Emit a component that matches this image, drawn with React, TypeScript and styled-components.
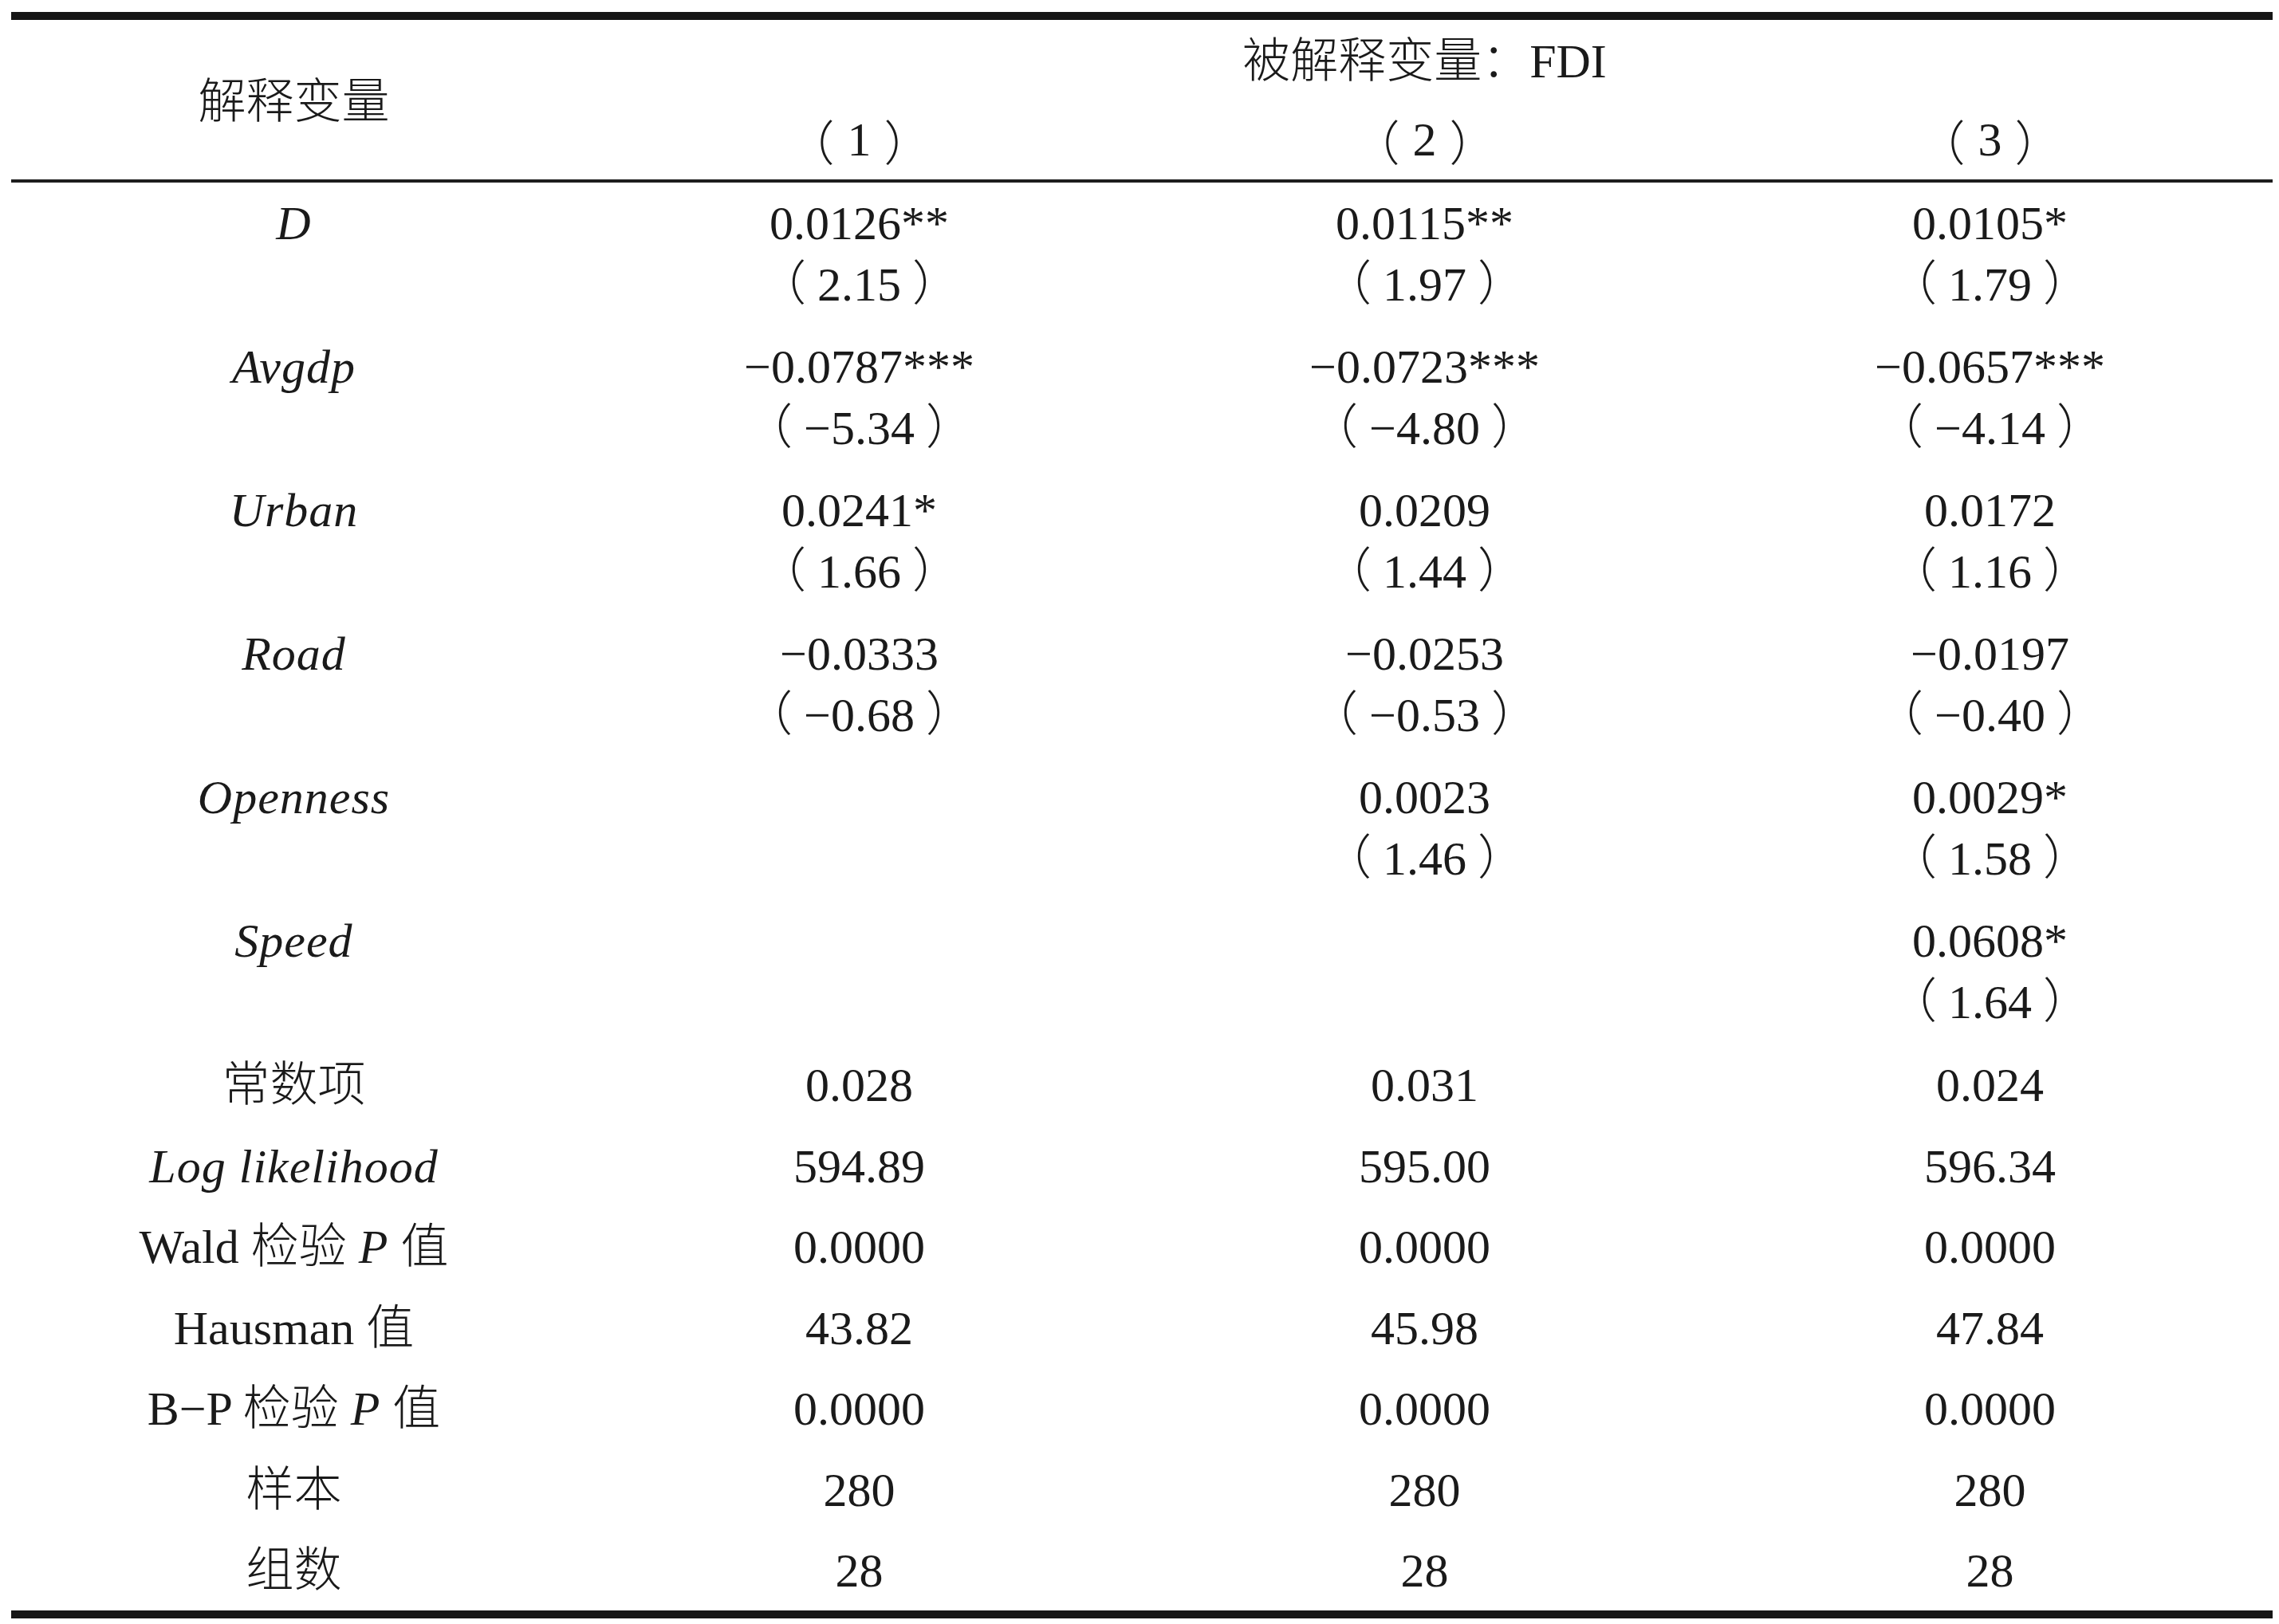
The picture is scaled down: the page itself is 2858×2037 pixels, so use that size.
import styled, { createGlobalStyle } from "styled-components"

const GlobalStyle = createGlobalStyle`
  html, body {
    margin: 0;
    padding: 0;
    background: #fff;
  }
  body {
    font-family: "Liberation Serif", "Noto Sans CJK SC", serif;
    color: #1a1a1a;
  }
`

const Page = styled.div`
  padding: 15px 8px 0 14px;
`

const Table = styled.div`
  border-top: 10px solid #161616;
  border-bottom: 10px solid #161616;
  font-size: 60px;
  font-weight: 300;
`

const Head = styled.div`
  display: grid;
  grid-template-columns: repeat(4, 1fr);
  grid-template-rows: 100px 100px;
  border-bottom: 4px solid #1e1e1e;
`

const HeadCell = styled.div<{ $row: string; $col: string; $lift?: number }>`
  grid-row: ${(p) => p.$row};
  grid-column: ${(p) => p.$col};
  display: flex;
  align-items: center;
  justify-content: center;
  white-space: nowrap;
  padding-bottom: ${(p) => p.$lift ?? 0}px;
`

const Row = styled.div<{ $pair?: boolean }>`
  display: grid;
  grid-template-columns: repeat(4, 1fr);
  padding: ${(p) => (p.$pair ? "13px 0 13px" : "14px 0 10.5px")};
`

const Cell = styled.div`
  display: flex;
  flex-direction: column;
  align-items: center;
`

const Line = styled.div`
  height: 77px;
  line-height: 77px;
  white-space: nowrap;
`

const Var = styled.span`
  font-style: italic;
  letter-spacing: 1px;
`

const Num = styled.span<{ $wide?: boolean }>`
  padding: 0 ${(p) => (p.$wide ? 16 : 14)}px;
`

type Val = [string, string] | null

const pairRows: { label: string; vals: Val[] }[] = [
  { label: "D", vals: [["0.0126**", "2.15"], ["0.0115**", "1.97"], ["0.0105*", "1.79"]] },
  { label: "Avgdp", vals: [["−0.0787***", "−5.34"], ["−0.0723***", "−4.80"], ["−0.0657***", "−4.14"]] },
  { label: "Urban", vals: [["0.0241*", "1.66"], ["0.0209", "1.44"], ["0.0172", "1.16"]] },
  { label: "Road", vals: [["−0.0333", "−0.68"], ["−0.0253", "−0.53"], ["−0.0197", "−0.40"]] },
  { label: "Openness", vals: [null, ["0.0023", "1.46"], ["0.0029*", "1.58"]] },
  { label: "Speed", vals: [null, null, ["0.0608*", "1.64"]] },
]

const singleRows: { label: React.ReactNode; vals: string[] }[] = [
  { label: "常数项", vals: ["0.028", "0.031", "0.024"] },
  { label: <Var>Log likelihood</Var>, vals: ["594.89", "595.00", "596.34"] },
  { label: <>Wald 检验 <Var>P</Var> 值</>, vals: ["0.0000", "0.0000", "0.0000"] },
  { label: "Hausman 值", vals: ["43.82", "45.98", "47.84"] },
  { label: <>B−P 检验 <Var>P</Var> 值</>, vals: ["0.0000", "0.0000", "0.0000"] },
  { label: "样本", vals: ["280", "280", "280"] },
  { label: "组数", vals: ["28", "28", "28"] },
]

const App = () => {
  return (
    <Page>
      <GlobalStyle />
      <Table>
        <Head>
          <HeadCell $row="1 / 3" $col="1" $lift={8}>解释变量</HeadCell>
          <HeadCell $row="1" $col="2 / 5" $lift={10}>被解释变量：FDI</HeadCell>
          {["1", "2", "3"].map((n, i) => (
            <HeadCell key={n} $row="2" $col={String(i + 2)}>
              （<Num $wide>{n}</Num>）
            </HeadCell>
          ))}
        </Head>
        {pairRows.map((r) => (
          <Row key={r.label} $pair>
            <Cell>
              <Line><Var>{r.label}</Var></Line>
            </Cell>
            {r.vals.map((v, i) => (
              <Cell key={i}>
                {v && (
                  <>
                    <Line>{v[0]}</Line>
                    <Line>（<Num>{v[1]}</Num>）</Line>
                  </>
                )}
              </Cell>
            ))}
          </Row>
        ))}
        {singleRows.map((r, idx) => (
          <Row key={idx}>
            <Cell>
              <Line>{r.label}</Line>
            </Cell>
            {r.vals.map((v, i) => (
              <Cell key={i}>
                <Line>{v}</Line>
              </Cell>
            ))}
          </Row>
        ))}
      </Table>
    </Page>
  )
}

export default App
